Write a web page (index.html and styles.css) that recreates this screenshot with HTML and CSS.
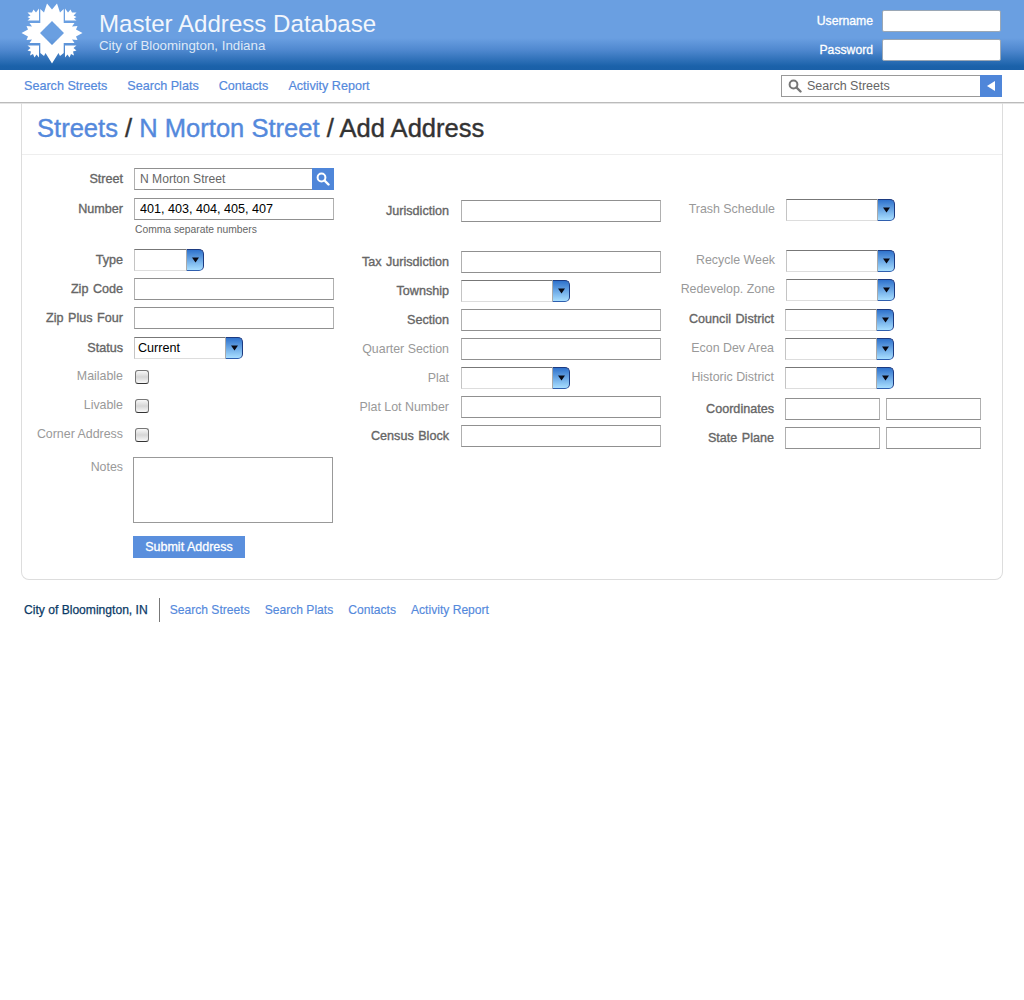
FILE: index.html
```html
<!DOCTYPE html>
<html lang="en">
<head>
<meta charset="UTF-8">
<meta name="viewport" content="width=device-width, initial-scale=1">
<title>Master Address Database</title>
<link rel="stylesheet" href="styles.css">
</head>
<body>
<svg class="defs" width="0" height="0" aria-hidden="true">
  <defs>
    <symbol id="arrow" viewBox="0 0 9 6"><path d="M1 0.5H8L4.5 5.5Z" fill="#0a0a14"/></symbol>
    <symbol id="lens" viewBox="0 0 14 14"><circle cx="5.5" cy="5.5" r="3.9" fill="none" stroke="currentColor" stroke-width="2"/><path d="M8.5 8.5L12.5 12.5" stroke="currentColor" stroke-width="2.4" stroke-linecap="round"/></symbol>
  </defs>
</svg>

<header class="masthead">
  <svg class="logo" viewBox="-31 -31 62 62" width="62" height="62" aria-hidden="true">
    <g fill="#fff">
      <path d="M-11.7 -8.7V-24L-8 -20.5L-5 -29.5L0 -23.5L5 -29.5L8 -20.5L11.7 -24V-8.7L6 -6L0 -12L-6 -6Z"/>
      <path d="M-11.7 8.7V20L-8 23L-6.5 20L0 30.5L6.5 20L8 23L11.7 20V8.7L6 6L0 12L-6 6Z"/>
      <path id="side" d="M8 -10H22.5L20 -6.5L25.5 -7L24 -3.5L30.5 0L24 3.5L25.5 7L20 6.5L22.5 10H8L6 6L12 0L6 -6Z"/>
      <use href="#side" transform="rotate(180)"/>
      <path id="cornerTop" d="M-13 -12.6V-24.5L-16 -20.5L-18.5 -23.5L-20 -20.5H-24.5L-21.5 -17.5L-24.5 -16L-22 -14.5L-24.5 -12.6Z"/>
      <use href="#cornerTop" transform="scale(-1 1)"/>
      <path id="cornerLow" d="M-13 12.6V24.5L-15.5 21.5L-17.5 24.5L-19 21L-22 22.5L-21 18.5L-24.5 17.5L-21.5 15L-24.5 12.6Z"/>
      <use href="#cornerLow" transform="scale(-1 1)"/>
    </g>
  </svg>
  <div class="brand">
    <div class="brand-name">Master Address Database</div>
    <div class="brand-sub">City of Bloomington, Indiana</div>
  </div>
  <form class="login">
    <label class="login-row">Username <input class="login-input" type="text"></label>
    <label class="login-row">Password <input class="login-input" type="password"></label>
  </form>
</header>

<nav class="topnav">
  <a href="#">Search Streets</a>
  <a href="#">Search Plats</a>
  <a href="#">Contacts</a>
  <a href="#">Activity Report</a>
  <div class="quicksearch">
    <svg class="quicksearch-lens" width="14" height="14"><use href="#lens"/></svg>
    <span class="quicksearch-text">Search Streets</span>
    <span class="quicksearch-btn"></span>
  </div>
</nav>

<main class="panel">
  <h1 class="crumbs"><a href="#">Streets</a> / <a href="#">N Morton Street</a> / Add Address</h1>
  <form class="address-form">
    <div class="col col-a">
      <div class="row gap-8">
        <label class="lbl req">Street</label>
        <div class="street-field">
          <input class="txt txt-street" type="text" value="N Morton Street">
          <span class="street-btn"><svg width="14" height="14"><use href="#lens"/></svg></span>
        </div>
      </div>
      <div class="row gap-0">
        <label class="lbl req">Number</label>
        <input class="txt txt-number" type="text" value="401, 403, 404, 405, 407">
      </div>
      <div class="hint">Comma separate numbers</div>
      <div class="row">
        <label class="lbl req">Type</label>
        <div class="sel sel-xs"><span class="sel-box"></span><span class="sel-btn"><svg width="9" height="6"><use href="#arrow"/></svg></span></div>
      </div>
      <div class="row">
        <label class="lbl req">Zip Code</label>
        <input class="txt" type="text">
      </div>
      <div class="row gap-8">
        <label class="lbl req">Zip Plus Four</label>
        <input class="txt" type="text">
      </div>
      <div class="row">
        <label class="lbl req">Status</label>
        <div class="sel"><span class="sel-box sel-value">Current</span><span class="sel-btn"><svg width="9" height="6"><use href="#arrow"/></svg></span></div>
      </div>
      <div class="row">
        <label class="lbl lbl-up">Mailable</label>
        <span class="check"></span>
      </div>
      <div class="row">
        <label class="lbl lbl-up">Livable</label>
        <span class="check"></span>
      </div>
      <div class="row gap-11">
        <label class="lbl lbl-up">Corner Address</label>
        <span class="check"></span>
      </div>
      <div class="row row-notes">
        <label class="lbl">Notes</label>
        <textarea class="notes"></textarea>
      </div>
      <button class="submit" type="button">Submit Address</button>
    </div>

    <div class="col col-b">
      <div class="row gap-29">
        <label class="lbl req">Jurisdiction</label>
        <input class="txt" type="text">
      </div>
      <div class="row">
        <label class="lbl req">Tax Jurisdiction</label>
        <input class="txt" type="text">
      </div>
      <div class="row">
        <label class="lbl req">Township</label>
        <div class="sel"><span class="sel-box"></span><span class="sel-btn"><svg width="9" height="6"><use href="#arrow"/></svg></span></div>
      </div>
      <div class="row">
        <label class="lbl req">Section</label>
        <input class="txt" type="text">
      </div>
      <div class="row">
        <label class="lbl">Quarter Section</label>
        <input class="txt" type="text">
      </div>
      <div class="row">
        <label class="lbl">Plat</label>
        <div class="sel"><span class="sel-box"></span><span class="sel-btn"><svg width="9" height="6"><use href="#arrow"/></svg></span></div>
      </div>
      <div class="row">
        <label class="lbl">Plat Lot Number</label>
        <input class="txt" type="text">
      </div>
      <div class="row">
        <label class="lbl req">Census Block</label>
        <input class="txt" type="text">
      </div>
    </div>

    <div class="col col-c">
      <div class="row gap-29">
        <label class="lbl lbl-up">Trash Schedule</label>
        <div class="sel"><span class="sel-box"></span><span class="sel-btn"><svg width="9" height="6"><use href="#arrow"/></svg></span></div>
      </div>
      <div class="row">
        <label class="lbl lbl-up">Recycle Week</label>
        <div class="sel"><span class="sel-box"></span><span class="sel-btn"><svg width="9" height="6"><use href="#arrow"/></svg></span></div>
      </div>
      <div class="row gap-8">
        <label class="lbl lbl-up">Redevelop. Zone</label>
        <div class="sel"><span class="sel-box"></span><span class="sel-btn"><svg width="9" height="6"><use href="#arrow"/></svg></span></div>
      </div>
      <div class="row row-in">
        <label class="lbl req lbl-up">Council District</label>
        <div class="sel"><span class="sel-box"></span><span class="sel-btn"><svg width="9" height="6"><use href="#arrow"/></svg></span></div>
      </div>
      <div class="row row-in">
        <label class="lbl lbl-up">Econ Dev Area</label>
        <div class="sel"><span class="sel-box"></span><span class="sel-btn"><svg width="9" height="6"><use href="#arrow"/></svg></span></div>
      </div>
      <div class="row row-in gap-9">
        <label class="lbl lbl-up">Historic District</label>
        <div class="sel"><span class="sel-box"></span><span class="sel-btn"><svg width="9" height="6"><use href="#arrow"/></svg></span></div>
      </div>
      <div class="row row-in">
        <label class="lbl req">Coordinates</label>
        <input class="txt txt-half" type="text">
        <input class="txt txt-half" type="text">
      </div>
      <div class="row row-in">
        <label class="lbl req">State Plane</label>
        <input class="txt txt-half" type="text">
        <input class="txt txt-half" type="text">
      </div>
    </div>
  </form>
</main>

<footer class="foot">
  <span class="foot-org">City of Bloomington, IN</span>
  <a href="#">Search Streets</a>
  <a href="#">Search Plats</a>
  <a href="#">Contacts</a>
  <a href="#">Activity Report</a>
</footer>
</body>
</html>
```

FILE: styles.css
```css
*{box-sizing:border-box;}
body{margin:0;background:#fff;font-family:"Liberation Sans",Arial,sans-serif;font-size:12px;color:#333;}
a{color:#5489dc;text-decoration:none;}
.defs{position:absolute;}

/* header */
.masthead{height:70px;display:flex;padding-left:21px;background:linear-gradient(#6a9fe1 0,#6a9fe1 38px,#4f88cf 50px,#1b62aa 66px,#1a60a8 70px);color:#fff;}
.logo{margin-top:2px;flex:none;}
.brand{margin-left:16px;padding-top:9px;}
.brand-name{font-size:24.1px;line-height:29px;color:#f2f6fc;}
.brand-sub{font-size:13.3px;line-height:15px;color:#dfe9f7;}
.login{margin-left:auto;padding:10px 23px 0 0;}
.login-row{display:flex;justify-content:flex-end;align-items:center;gap:9px;height:22px;margin-bottom:7px;font-size:12.2px;-webkit-text-stroke:.3px currentColor;}
.login-input{width:119px;height:22px;border:1px solid #9aa7b5;border-radius:2px;background:#fff;}

.topnav{height:33px;display:flex;align-items:center;gap:20px;padding:0 22px 0 24px;border-bottom:1px solid #bbb;box-shadow:0 1px 0 #e4e4e4;font-size:12.6px;-webkit-text-stroke:.2px currentColor;}
.quicksearch{margin-left:auto;width:221px;height:22px;display:flex;align-items:center;border:1px solid #999;color:#777;-webkit-text-stroke:0;}
.quicksearch-lens{margin-left:6px;flex:none;}
.quicksearch-text{margin-left:5px;flex:1;font-size:12.5px;color:#666;}
.quicksearch-btn{width:22px;height:22px;margin:-1px;background:#4f86d9;position:relative;}
.quicksearch-btn::after{content:"";position:absolute;left:7px;top:6px;border:5px solid transparent;border-left:0;border-right:8px solid #fff;}

/* panel */
.panel{margin:0 21px;height:477px;border:1px solid #ddd;border-top:0;border-radius:0 0 8px 8px;}
.crumbs{margin:0;height:52px;padding:9px 0 0 15px;border-bottom:1px solid #eee;font-size:25.55px;line-height:32px;font-weight:normal;color:#333;-webkit-text-stroke:.4px currentColor;}
.address-form{display:flex;padding-top:13px;}
.col-a{width:312px;}
.col-b{width:327px;padding-top:32px;}
.col-c{padding-top:31px;}

.row{display:flex;align-items:center;height:22px;margin-bottom:7px;}
.gap-0{margin-bottom:0;}
.gap-8{margin-bottom:8px;}
.gap-9{margin-bottom:9px;}
.gap-11{margin-bottom:11px;}
.gap-29{margin-bottom:29px;}
.lbl{flex:none;text-align:right;color:#999;font-size:12.4px;}
.lbl.req{color:#666;font-size:12.6px;word-spacing:1px;-webkit-text-stroke:.35px currentColor;}
.lbl-up{padding-bottom:2px;}
.col-a .lbl{width:101px;margin-right:11px;}
.col-b .lbl{width:115px;margin-right:12px;}
.col-c .lbl{width:114px;margin-right:11px;}
.col-c .row-in .lbl{width:113px;margin-right:11px;}

.txt{width:200px;height:22px;padding:0 5px;border:1px solid #b0b0b0;border-top-color:#909090;border-bottom-color:#909090;background:#fff;font:12px "Liberation Sans",Arial,sans-serif;color:#000;}
.txt-half{width:95px;margin-right:6px;}
.txt-street{border-right:0;flex:1;min-width:0;font-size:12.1px;color:#666;}
.txt-number{font-size:12.6px;}
.street-field{width:200px;display:flex;}
.street-btn{flex:none;width:22px;height:22px;background:#4f86d9;color:#fff;display:flex;align-items:center;justify-content:center;}
.hint{height:29px;padding:3px 0 0 113px;font-size:10.3px;line-height:14px;color:#666;}

.sel{display:flex;width:109px;height:22px;}
.sel-xs{width:70px;}
.sel-box{flex:1;border:1px solid #ddd;border-top-color:#777;border-left-color:#c4c4c4;border-right:0;background:#fff;font-size:12.6px;line-height:20px;padding-left:3px;color:#000;}
.sel-btn{width:18px;height:22px;border:1px solid #1c3a80;border-bottom-color:#2f5fae;border-left:1px solid #aaa;border-radius:0 5px 5px 0;background:linear-gradient(#2f72cc,#a8deff);display:flex;align-items:center;justify-content:center;}

.check{width:14px;height:14px;margin-left:1px;border:1px solid #777;border-bottom-color:#333;border-radius:3px;background:linear-gradient(#f8f8f8,#d6d6d6 50%,#f8f8f8);}

.row-notes{height:66px;align-items:flex-start;margin-bottom:13px;}
.row-notes .lbl{padding-top:3px;margin-right:10px;}
.notes{width:200px;height:66px;border:1px solid #999;resize:none;}
.submit{display:block;width:112px;height:22px;margin-left:111px;border:0;background:#5a8fdd;color:#fff;font:12.5px "Liberation Sans",Arial,sans-serif;-webkit-text-stroke:.3px currentColor;}

/* footer */
.foot{display:flex;align-items:center;height:24px;margin-top:18px;padding-left:24px;gap:15px;font-size:12.1px;-webkit-text-stroke:.15px currentColor;}
.foot-org{padding-right:11px;margin-right:-5px;height:24px;line-height:24px;border-right:1px solid #777;color:#0b3a66;-webkit-text-stroke:.25px currentColor;}
```
